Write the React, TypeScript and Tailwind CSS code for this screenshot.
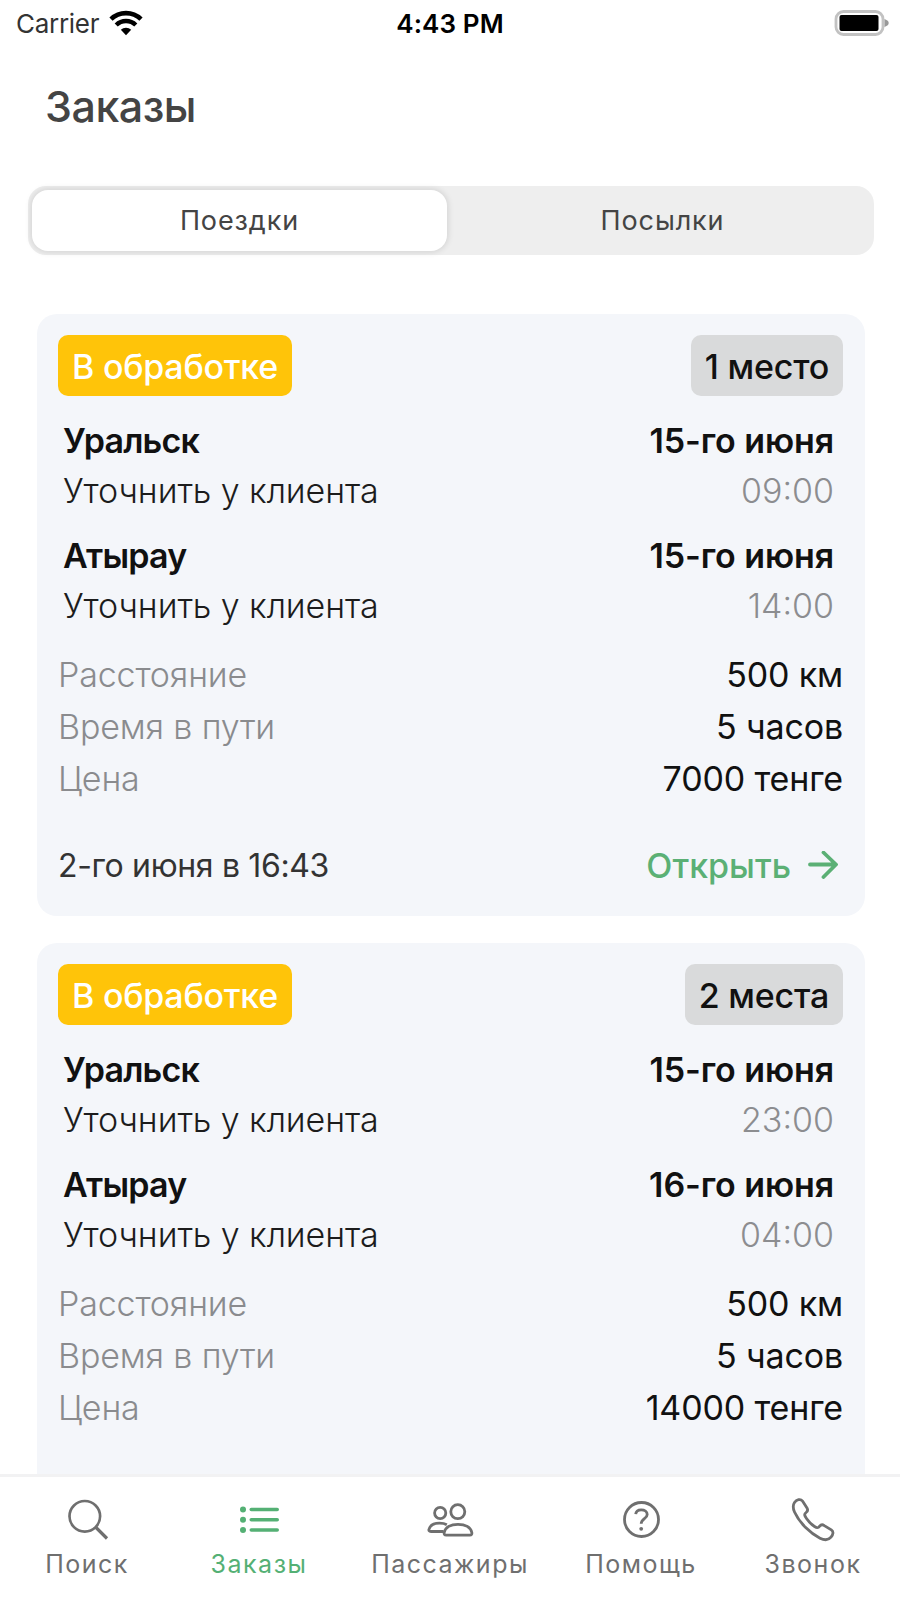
import React, { useState } from 'react';

type Stop = { city: string; address: string; date: string; time: string };

type Order = {
  id: number;
  status: string;
  seats: string;
  stops: Stop[];
  distance: string;
  duration: string;
  price: string;
  created?: string;
};

const ADDRESS = 'Уточнить у клиента';

const orders: Order[] = [
  {
    id: 1,
    status: 'В обработке',
    seats: '1 место',
    stops: [
      { city: 'Уральск', address: ADDRESS, date: '15-го июня', time: '09:00' },
      { city: 'Атырау', address: ADDRESS, date: '15-го июня', time: '14:00' },
    ],
    distance: '500 км',
    duration: '5 часов',
    price: '7000 тенге',
    created: '2-го июня в 16:43',
  },
  {
    id: 2,
    status: 'В обработке',
    seats: '2 места',
    stops: [
      { city: 'Уральск', address: ADDRESS, date: '15-го июня', time: '23:00' },
      { city: 'Атырау', address: ADDRESS, date: '16-го июня', time: '04:00' },
    ],
    distance: '500 км',
    duration: '5 часов',
    price: '14000 тенге',
  },
];

const StatusBar = () => (
  <div className="grid h-[46px] grid-cols-3 items-center pl-4 pr-[11px]">
    <div className="flex items-center gap-[10px]">
      <span className="pt-[2px] text-[26px] leading-8 tracking-[-0.3px] text-[#333]">Carrier</span>
      <svg width="34" height="26" viewBox="0 0 34 26" fill="none">
        <path d="M2 9.2a21.5 21.5 0 0 1 30 0" stroke="#000" strokeWidth="4.6" />
        <path d="M7.2 15a14 14 0 0 1 19.6 0" stroke="#000" strokeWidth="4.4" />
        <path d="M17 25.2l-5.2-5.4a7.5 7.5 0 0 1 10.4 0z" fill="#000" />
      </svg>
    </div>
    <span className="pr-[5px] pt-[2px] text-center text-[26px] font-semibold leading-8 tracking-[0.1px] text-black">
      4:43 PM
    </span>
    <svg className="justify-self-end" width="55" height="26" viewBox="0 0 55 26">
      <rect x="2" y="1.5" width="47" height="23" rx="7.5" fill="#fff" stroke="#c2c2c2" strokeWidth="2.8" />
      <rect x="5.5" y="5" width="39" height="16" rx="2" fill="#000" />
      <path d="M50.5 9c3 1.2 4.2 2.4 4.2 4s-1.2 2.800-4.2 4z" fill="#999" />
    </svg>
  </div>
);

const StopRow: React.FC<{ stop: Stop }> = ({ stop }) => (
  <div className="flex h-[115px] justify-between pl-[5px] pr-[9px]">
    <div>
      <p className="text-[34px] font-semibold leading-[50px] tracking-[-0.8px] text-[#111]">{stop.city}</p>
      <p className="text-[34px] font-light leading-[50px] tracking-[-0.08px] text-[#1c1c1c]">{stop.address}</p>
    </div>
    <div className="text-right">
      <p className="text-[34px] font-semibold leading-[50px] tracking-[-0.1px] text-[#111]">{stop.date}</p>
      <p className="text-[34px] font-light leading-[50px] text-[#8c8d90]">{stop.time}</p>
    </div>
  </div>
);

const DetailRow: React.FC<{ label: string; value: string }> = ({ label, value }) => (
  <div className="flex h-[52px] items-center justify-between text-[34px]">
    <span className="font-light tracking-[-0.15px] text-[#8a8b8e]">{label}</span>
    <span className="tracking-[-0.15px] text-[#111]">{value}</span>
  </div>
);

const OrderCard: React.FC<{ order: Order }> = ({ order }) => (
  <div className="h-[602px] shrink-0 rounded-[20px] bg-[#f4f6fa] pl-[21px] pr-[22px] pt-[21px]">
    <div className="flex items-center justify-between">
      <span className="h-[61px] rounded-[10px] bg-[#ffc409] px-[14px] text-[34px] font-medium leading-[63px] tracking-[-0.25px] text-white">
        {order.status}
      </span>
      <span className="h-[61px] rounded-[10px] bg-[#d9dadb] px-[14px] text-[34px] font-medium leading-[63px] tracking-[-0.2px] text-[#111]">
        {order.seats}
      </span>
    </div>

    <div className="pt-5">
      {order.stops.map((stop) => (
        <StopRow key={stop.city} stop={stop} />
      ))}
    </div>

    <div className="pt-[2px]">
      <DetailRow label="Расстояние" value={order.distance} />
      <DetailRow label="Время в пути" value={order.duration} />
      <DetailRow label="Цена" value={order.price} />
    </div>

    {order.created && (
      <div className="mt-[36px] flex h-[50px] items-center justify-between">
        <span className="pt-px text-[32px] tracking-[-0.35px] text-[#333]">{order.created}</span>
        <button className="flex items-center gap-[17px] pr-[5px] text-[34px] font-medium text-[#5bb075]">
          Открыть
          <svg width="30" height="28" viewBox="0 0 30 28" fill="none" stroke="currentColor" strokeWidth="3.8">
            <path d="M2 13.5H27M15.5 1.5L28 13.5L15.5 26" strokeLinecap="round" strokeLinejoin="round" />
          </svg>
        </button>
      </div>
    )}
  </div>
);

const SearchIcon = () => (
  <svg width="44" height="44" viewBox="0 0 44 44" fill="none" stroke="currentColor" strokeWidth="2.7">
    <circle cx="19.8" cy="18.3" r="15.3" />
    <path d="M30.5 29l11.5 11.5" strokeWidth="3.2" />
  </svg>
);

const ListIcon = () => (
  <svg width="44" height="44" viewBox="0 0 44 44" fill="currentColor">
    {[11.5, 21.7, 32].map((y) => (
      <g key={y}>
        <circle cx="6" cy={y} r="3" />
        <rect x="12.5" y={y - 1.8} width="29.5" height="3.6" rx="1.8" />
      </g>
    ))}
  </svg>
);

const PeopleIcon = () => (
  <svg width="48" height="44" viewBox="0 0 48 44" fill="none" stroke="currentColor" strokeWidth="2.8" strokeLinejoin="round">
    <circle cx="14.2" cy="15" r="5.6" />
    <circle cx="31.8" cy="13.7" r="7" />
    <path d="M17.5 33.5H5c-2 0-2.5-1-1.9-2.6 1.2-3.6 5.4-5.7 10.4-5.7 3 0 5.5.5 7.3 1.5" />
    <path d="M32 26.3c-7.5 0-12.7 3.2-13.8 8.2-.3 1.7.3 2.7 2 2.7h23.6c1.700 0 2.300-1 2-2.700-1.100-5-6.300-8.200-13.800-8.200z" />
  </svg>
);

const HelpIcon = () => (
  <svg width="44" height="44" viewBox="0 0 44 44" fill="none" stroke="currentColor" strokeWidth="2.8">
    <circle cx="22.5" cy="21.5" r="17" />
    <path d="M16.7 16.2c.3-3 2.500-4.400 5.500-4.400 3.400 0 6 1.700 6 4.600 0 4.300-6 4.200-6 9.400" />
    <circle cx="22.2" cy="30.8" r="1.9" fill="currentColor" stroke="none" />
  </svg>
);

const PhoneIcon = () => (
  <svg width="44" height="44" viewBox="0 0 44 44" fill="none" stroke="currentColor" strokeWidth="2.8" strokeLinejoin="round">
    <path d="M3.500 4.500C5.500 1.500 9.500.5 11.500 3l4.500 7c1.200 2 .7 3.300-.9 4.500-2.200 1.700-1.700 3 .4 6 2.200 3.200 4.800 6 8 8 2.500 1.600 3.500 1.900 5.200-.3 1.200-1.600 3-1.700 4.600-.6l7 4.300c2.500 1.700 2 4.500-.3 7.300-2.500 3-6 3.500-11 1C19 35 8.500 25 3.500 14 2 10.500 1.500 7.500 3.500 4.500z" />
  </svg>
);

const tabs = [
  { label: 'Поиск', icon: SearchIcon, width: 'w-[174px]' },
  { label: 'Заказы', icon: ListIcon, width: 'w-[170px]' },
  { label: 'Пассажиры', icon: PeopleIcon, width: 'w-[212px]' },
  { label: 'Помощь', icon: HelpIcon, width: 'w-[170px]' },
  { label: 'Звонок', icon: PhoneIcon, width: 'w-[174px]' },
];

const segments = [
  { name: 'Поездки', size: 'w-[415px]' },
  { name: 'Посылки', size: 'flex-1 pl-[4px]' },
];

const App: React.FC = () => {
  const [segment, setSegment] = useState('Поездки');
  const [active, setActive] = useState('Заказы');

  return (
    <div className="flex h-[1598px] w-[900px] flex-col overflow-hidden bg-white font-['Inter',sans-serif]">
      <StatusBar />

      {/* Header */}
      <h1 className="mt-[29px] pl-[45px] text-[43px] font-medium leading-[62px] tracking-[-0.5px] text-[#444]">
        Заказы
      </h1>

      {/* Segment switch */}
      <div className="ml-[28px] mr-[26px] mt-[49px] flex h-[69px] shrink-0 rounded-[18px] bg-[#eee] py-[4px] pl-[4px]">
        {segments.map(({ name, size }) => (
          <button
            key={name}
            onClick={() => setSegment(name)}
            className={`h-full rounded-[16px] pt-[2px] text-[27px] tracking-[0.9px] text-[#444] ${size} ${
              segment === name ? 'bg-white shadow-[0_0_6px_1px_rgba(0,0,0,0.12)]' : ''
            }`}
          >
            {name}
          </button>
        ))}
      </div>

      {/* Orders */}
      <div className="ml-[37px] mr-[35px] mt-[59px] flex min-h-0 flex-1 flex-col gap-[27px] overflow-hidden">
        {orders.map((order) => (
          <OrderCard key={order.id} order={order} />
        ))}
      </div>

      {/* Tab bar */}
      <div className="flex h-[124px] shrink-0 border-t-[3px] border-[#f2f2f3] bg-white">
        {tabs.map(({ label, icon: Icon, width }) => (
          <button
            key={label}
            onClick={() => setActive(label)}
            className={`flex flex-col items-center pt-[21px] ${width} ${
              active === label ? 'text-[#54b074]' : 'text-[#6f6f6f]'
            }`}
          >
            <Icon />
            <span className="mt-[5px] text-[25px] leading-[34px] tracking-[1.5px]">{label}</span>
          </button>
        ))}
      </div>
    </div>
  );
};

export default App;
